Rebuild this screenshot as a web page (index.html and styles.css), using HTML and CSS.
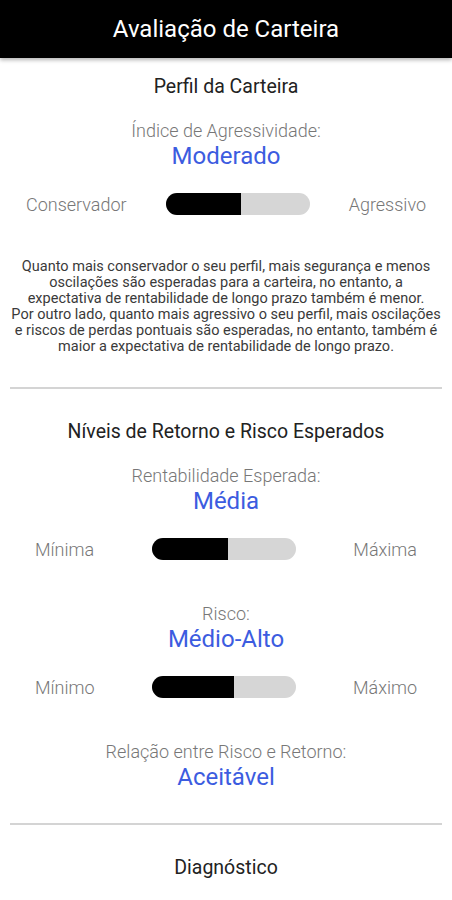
FILE: index.html
```html
<!DOCTYPE html>
<html lang="pt-BR">
<head>
    <meta charset="UTF-8">
    <meta name="viewport" content="width=device-width, initial-scale=1.0">
    <title>Avaliação de Carteira</title>
    <link rel="stylesheet" href="styles.css">
</head>
<body>
    <header class="app-bar">
        <h1>Avaliação de Carteira</h1>
    </header>

    <main class="content">
        <section class="section">
            <h2 class="section-title">Perfil da Carteira</h2>

            <div class="metric">
                <div class="metric-label">Índice de Agressividade:</div>
                <div class="metric-value">Moderado</div>
            </div>

            <div class="scale scale-wide">
                <span class="scale-label">Conservador</span>
                <div class="bar"><div class="bar-fill" style="width: 52%"></div></div>
                <span class="scale-label">Agressivo</span>
            </div>

            <p class="note">
                Quanto mais conservador o seu perfil, mais segurança e menos oscilações são esperadas para a carteira, no entanto, a<br>
                expectativa de rentabilidade de longo prazo também é menor.<br>
                Por outro lado, quanto mais agressivo o seu perfil, mais oscilações e riscos de perdas pontuais são esperadas, no entanto, também é maior a expectativa de rentabilidade de longo prazo.
            </p>
        </section>

        <hr class="divider">

        <section class="section">
            <h2 class="section-title">Níveis de Retorno e Risco Esperados</h2>

            <div class="group">
                <div class="metric">
                    <div class="metric-label">Rentabilidade Esperada:</div>
                    <div class="metric-value">Média</div>
                </div>
                <div class="scale">
                    <span class="scale-label">Mínima</span>
                    <div class="bar"><div class="bar-fill" style="width: 53%"></div></div>
                    <span class="scale-label">Máxima</span>
                </div>
            </div>

            <div class="group">
                <div class="metric">
                    <div class="metric-label">Risco:</div>
                    <div class="metric-value">Médio-Alto</div>
                </div>
                <div class="scale">
                    <span class="scale-label">Mínimo</span>
                    <div class="bar"><div class="bar-fill" style="width: 57%"></div></div>
                    <span class="scale-label">Máximo</span>
                </div>
            </div>

            <div class="group">
                <div class="metric">
                    <div class="metric-label">Relação entre Risco e Retorno:</div>
                    <div class="metric-value">Aceitável</div>
                </div>
            </div>
        </section>

        <hr class="divider">

        <section class="section">
            <h2 class="section-title">Diagnóstico</h2>
        </section>
    </main>
</body>
</html>
```

FILE: styles.css
```css
body {
    margin: 0;
    font-family: Roboto, "Liberation Sans", sans-serif;
    background-color: #fff;
    color: #222;
}

.app-bar {
    height: 58px;
    background-color: #000;
    display: flex;
    align-items: center;
    justify-content: center;
    box-shadow: 0 2px 4px rgba(0, 0, 0, 0.3);
}

.app-bar h1 {
    margin: 0;
    color: #fff;
    font-size: 24px;
    font-weight: 400;
}

.content {
    padding: 0 10px;
}

.section {
    padding-top: 17px;
}

.section-title {
    margin: 0;
    font-size: 19.5px;
    font-weight: 400;
    line-height: 24px;
    text-align: center;
    color: #222;
}

.metric {
    margin-top: 21px;
    text-align: center;
}

.metric-label {
    font-size: 18px;
    font-weight: 300;
    line-height: 22px;
    color: #777;
}

.metric-value {
    font-size: 24px;
    line-height: 28px;
    color: #3c5ce0;
}

.scale {
    margin-top: 20px;
    height: 28px;
    padding: 0 25px;
    display: flex;
    align-items: center;
    justify-content: space-between;
}

.scale-wide {
    padding: 0 16px;
}

.scale-label {
    font-size: 18px;
    font-weight: 300;
    color: #777;
}

.bar {
    width: 144px;
    height: 22px;
    border-radius: 11px;
    background-color: #d6d6d6;
    overflow: hidden;
}

.bar-fill {
    height: 100%;
    background-color: #000;
}

.group + .group {
    margin-top: 40px;
}

.note {
    margin: 41px 0 0;
    font-size: 14.5px;
    line-height: 16px;
    text-align: center;
    color: #3a3a3a;
}

.divider {
    margin: 32px 0 0;
    border: none;
    height: 2px;
    background-color: #d4d4d4;
}

.divider + .section {
    padding-top: 31px;
}
```
